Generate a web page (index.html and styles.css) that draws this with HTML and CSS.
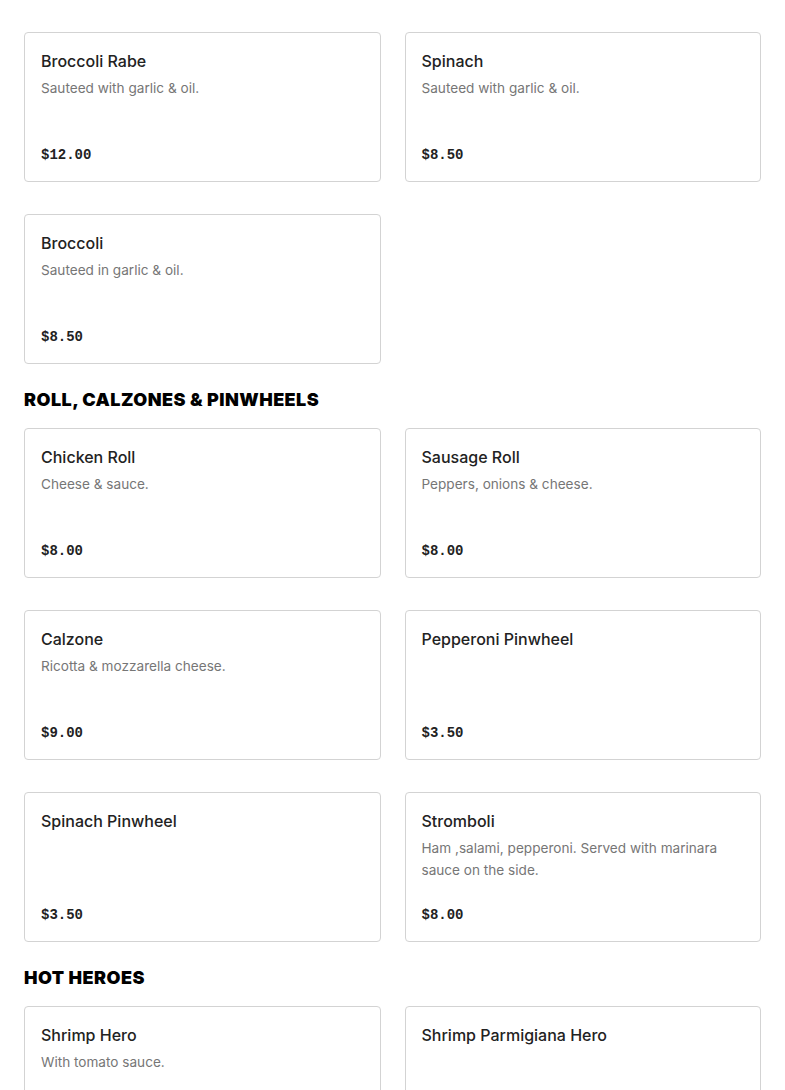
FILE: index.html
```html
<!DOCTYPE html>
<html>
<head>
<meta charset="utf-8">
<link rel="stylesheet" href="styles.css">
</head>
<body>
<main class="menu">
  <section class="grid">
    <div class="card"><div class="name">Broccoli Rabe</div><div class="desc">Sauteed with garlic &amp; oil.</div><div class="price">$12.00</div></div>
    <div class="card"><div class="name">Spinach</div><div class="desc">Sauteed with garlic &amp; oil.</div><div class="price">$8.50</div></div>
    <div class="card"><div class="name">Broccoli</div><div class="desc">Sauteed in garlic &amp; oil.</div><div class="price">$8.50</div></div>
  </section>
  <h2 class="heading">ROLL, CALZONES &amp; PINWHEELS</h2>
  <section class="grid">
    <div class="card"><div class="name">Chicken Roll</div><div class="desc">Cheese &amp; sauce.</div><div class="price">$8.00</div></div>
    <div class="card"><div class="name">Sausage Roll</div><div class="desc">Peppers, onions &amp; cheese.</div><div class="price">$8.00</div></div>
    <div class="card"><div class="name">Calzone</div><div class="desc">Ricotta &amp; mozzarella cheese.</div><div class="price">$9.00</div></div>
    <div class="card"><div class="name">Pepperoni Pinwheel</div><div class="price">$3.50</div></div>
    <div class="card"><div class="name">Spinach Pinwheel</div><div class="price">$3.50</div></div>
    <div class="card"><div class="name">Stromboli</div><div class="desc">Ham ,salami, pepperoni. Served with marinara sauce on the side.</div><div class="price">$8.00</div></div>
  </section>
  <h2 class="heading">HOT HEROES</h2>
  <section class="grid">
    <div class="card"><div class="name">Shrimp Hero</div><div class="desc">With tomato sauce.</div><div class="price">$12.00</div></div>
    <div class="card"><div class="name">Shrimp Parmigiana Hero</div><div class="price">$13.00</div></div>
  </section>
</main>
</body>
</html>
```

FILE: styles.css
```css
* { box-sizing: border-box; }
html, body { margin: 0; padding: 0; background: #fff; }
body { font-family: "Inter", "Liberation Sans", sans-serif; color: #222; }
.menu { padding: 32px 24px 0; }
.grid {
  display: grid;
  grid-template-columns: 1fr 1fr;
  column-gap: 24px;
  row-gap: 32px;
}
.card {
  border: 1px solid #d3d3d3;
  border-radius: 4px;
  height: 150px;
  padding: 16px 16px 14px;
  display: flex;
  flex-direction: column;
}
.name {
  font-size: 16px;
  font-weight: 500;
  line-height: 24px;
  color: #222;
}
.desc {
  margin-top: 4px;
  font-size: 13.6px;
  line-height: 22px;
  color: #767676;
}
.price {
  margin-top: auto;
  font-family: "Liberation Mono", "DejaVu Sans Mono", monospace;
  font-weight: 700;
  font-size: 14px;
  line-height: 24px;
  color: #222;
}
.heading {
  margin: 25px 0 17px;
  font-family: "Inter", "Liberation Sans", sans-serif;
  font-weight: 900;
  font-size: 18px;
  line-height: 22px;
  color: #000;
  letter-spacing: 0.45px;
}
```
